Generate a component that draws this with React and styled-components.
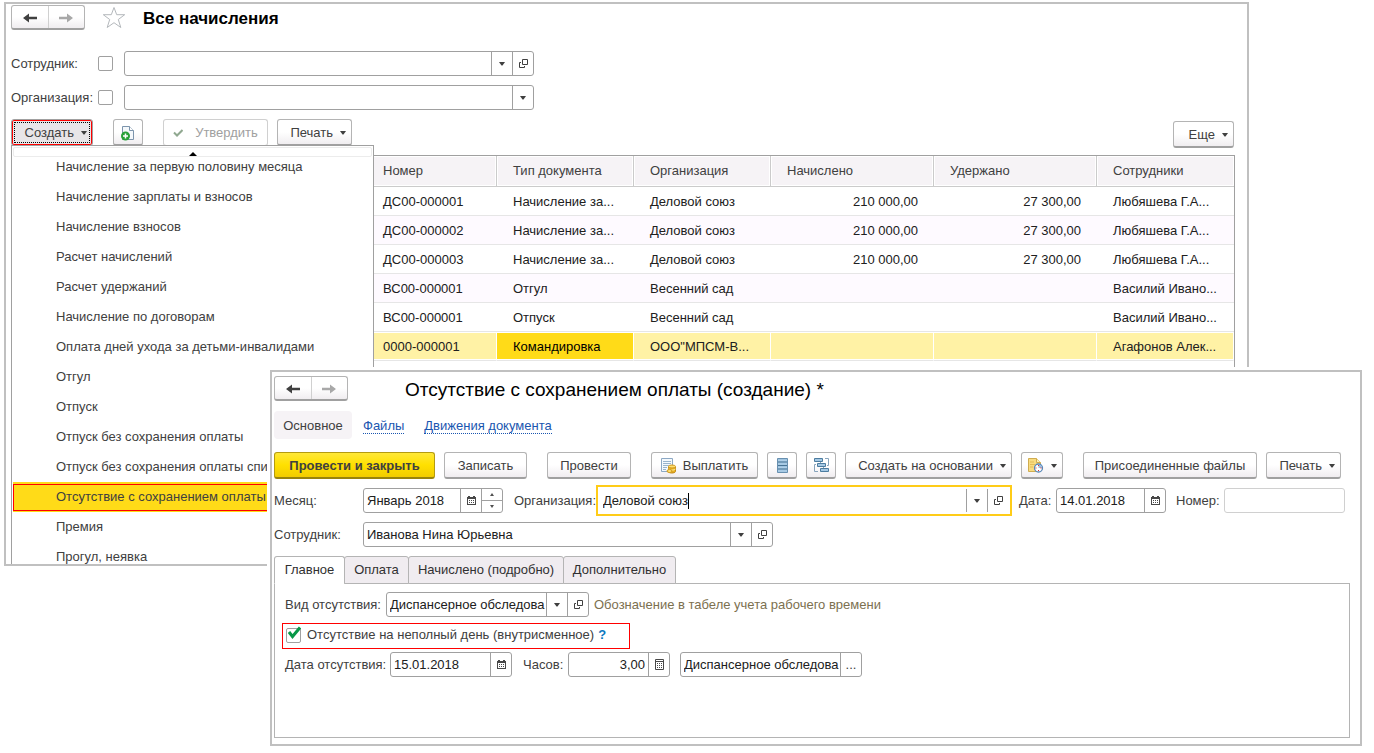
import React from "react";
import styled, { createGlobalStyle, css } from "styled-components";

const GlobalStyle = createGlobalStyle`
  *, *::before, *::after { box-sizing: border-box; }
  body {
    margin: 0;
    background: #fff;
    color: #404040;
    font: 13px/16px "Liberation Sans", Arial, sans-serif;
  }
  button, input { font: inherit; color: inherit; }
`;

/* ---------- windows ---------- */

const Desktop = styled.main`
  position: relative;
  min-height: 100vh;
  min-width: 1374px;
  overflow: hidden;
`;

const Window = styled.section`
  position: absolute;
  border: 2px solid #c0c0c0;
  background: #fff;
`;

const ListWindow = styled(Window)`
  z-index: 0;
  top: 2px;
  left: 4px;
  right: 125px;
  height: 564px;
  padding: 1px 13px 0 5px;
  overflow: hidden;
`;

const FormWindow = styled(Window)`
  z-index: 1;
  top: 370px;
  left: 270px;
  right: 12px;
  padding: 4px 10px 6px 2px;
  box-shadow: 0 0 0 3px #fff;
`;

const TitleBar = styled.header`
  display: flex;
  align-items: center;
  gap: ${(p) => p.$gap}px;
  height: 25px;
`;

const ListTitle = styled.h1`
  margin: 0;
  padding-top: 2px;
  font-size: 17px;
  line-height: 20px;
  font-weight: bold;
  color: #000;
`;

const FormTitle = styled(ListTitle).attrs({ as: "h2" })`
  font-size: 19px;
  font-weight: normal;
`;

/* ---------- buttons ---------- */

const raised = css`
  border: 1px solid #b4b4b4;
  border-bottom: 2px solid #a0a0a0;
  border-radius: 3px;
  background: linear-gradient(#fff 0%, #fff 50%, #f0edf0 100%);
`;

const NavGroup = styled.div`
  ${raised}
  display: flex;
  width: 74px;
  height: 25px;
`;

const NavButton = styled.button`
  flex: 1;
  display: flex;
  align-items: center;
  justify-content: center;
  padding: 1px 0 0;
  border: 0;
  background: none;
  color: #404040;
  & + & {
    border-left: 1px solid #d0d0d0;
    color: #a8a8a8;
  }
`;

const Button = styled.button`
  ${raised}
  display: flex;
  align-items: center;
  justify-content: ${(p) => (p.$menu ? "flex-end" : "center")};
  gap: ${(p) => p.$gap || 7}px;
  width: ${(p) => p.$width}px;
  height: 27px;
  padding: ${(p) => (p.$menu ? "1px 5px 0 0" : "1px 0 0")};
  white-space: nowrap;
  ${(p) =>
    p.$primary &&
    css`
      border-color: #b49b10;
      border-bottom-color: #98830c;
      background: linear-gradient(#ffe838 0%, #ffe000 50%, #f2cc00 100%);
      font-weight: bold;
    `}
  ${(p) =>
    p.$pressed &&
    css`
      background: #e8e5e8;
      border: 1px solid #a0a0a0;
      outline: 1px dotted #000;
      outline-offset: -4px;
      box-shadow: inset 0 0 0 1px #f00;
    `}
  &:disabled {
    color: #a0a0a0;
    border-color: #d0d0d0;
    border-bottom: 1px solid #c8c8c8;
    background: #fff;
  }
`;

const Toolbar = styled.div`
  display: flex;
  align-items: flex-start;
  gap: 9px;
`;

const ListToolbar = styled(Toolbar)`
  margin-top: 9px;
  height: 36px;
`;

const Spacer = styled.span`
  flex: ${(p) => (p.$width ? "none" : 1)};
  width: ${(p) => p.$width || 0}px;
`;

const MoreSlot = styled.div`
  padding-top: 2px;
`;

/* ---------- fields ---------- */

const Row = styled.div`
  display: flex;
  align-items: center;
  margin-top: ${(p) => p.$top || 0}px;
  height: 25px;
`;

const Label = styled.label`
  flex: none;
  width: ${(p) => p.$width}px;
  white-space: nowrap;
`;

const Field = styled.div`
  display: flex;
  flex: ${(p) => (p.$grow ? 1 : "none")};
  width: ${(p) => (p.$grow ? "auto" : `${p.$width}px`)};
  height: 25px;
  margin-right: ${(p) => p.$after || 0}px;
  border: 1px solid ${(p) => (p.$muted ? "#d0d0d0" : "#a0a0a0")};
  border-radius: 3px;
  background: #fff;
  ${(p) =>
    p.$focused &&
    css`
      height: 31px;
      padding: 2px;
      border: 2px solid #ffcc18;
      border-radius: 0;
    `}
`;

const Input = styled.input`
  flex: 1;
  min-width: 0;
  width: 0;
  padding: 0 ${(p) => (p.$right ? 3 : 0)}px 0 3px;
  border: 0;
  outline: 0;
  background: none;
  color: #202020;
  text-align: ${(p) => (p.$right ? "right" : "left")};
  ${(p) =>
    p.$content &&
    css`
      flex: none;
      width: auto;
      field-sizing: content;
    `}
`;

const Caret = styled.span`
  flex: none;
  align-self: center;
  width: 1px;
  height: 16px;
  margin-right: auto;
  background: #000;
`;

const FieldButton = styled.button`
  flex: none;
  display: flex;
  align-items: center;
  justify-content: center;
  width: 21px;
  padding: 0;
  border: 0;
  border-left: 1px solid #a0a0a0;
  background: none;
`;

const Spinner = styled.div`
  display: flex;
  flex-direction: column;
  width: 21px;
  border-left: 1px solid #a0a0a0;
`;

const SpinButton = styled.button`
  flex: 1;
  display: flex;
  align-items: center;
  justify-content: center;
  padding: 0;
  border: 0;
  background: none;
  & + & {
    border-top: 1px solid #a0a0a0;
  }
`;

const Check = styled.input.attrs({ type: "checkbox" })`
  appearance: none;
  flex: none;
  width: 15px;
  height: 15px;
  margin: 0 ${(p) => p.$after || 0}px 0 0;
  border: 1px solid #a0a0a0;
  border-radius: 2px;
  background: #fff;
`;

/* ---------- drop-down menu ---------- */

const MenuAnchor = styled.div`
  position: relative;
  margin-right: 11px;
`;

const Menu = styled.ul`
  position: absolute;
  z-index: 1;
  top: 26px;
  left: 0;
  width: 363px;
  height: 430px;
  margin: 0;
  padding: 1px;
  border: 1px solid #a0a0a0;
  background: #fff;
  list-style: none;
  overflow: hidden;
`;

const ScrollUp = styled.li`
  display: flex;
  align-items: flex-end;
  justify-content: center;
  height: 10px;
  margin-bottom: -5px;
  border: 1px solid #ececec;
  border-radius: 2px;
`;

const MenuItem = styled.li`
  height: 30px;
  padding-top: ${(p) => (p.$active ? 2 : 0)}px;
  background: ${(p) => (p.$active ? "#ffdb18" : "none")};
`;

const MenuButton = styled.button`
  display: block;
  width: 100%;
  height: ${(p) => (p.$active ? 27 : 30)}px;
  padding: ${(p) => (p.$active ? "0 0 2px 42px" : "0 0 0 43px")};
  border: ${(p) => (p.$active ? "1px solid #f00" : "0")};
  background: none;
  text-align: left;
  white-space: nowrap;
`;

/* ---------- table ---------- */

const Table = styled.table`
  width: 100%;
  table-layout: fixed;
  border: 1px solid #a0a0a0;
  border-spacing: 0;
  color: #202020;
`;

const Th = styled.th`
  height: 31px;
  padding: 0 0 0 16px;
  border-right: 1px solid #cbcbcb;
  border-bottom: 1px solid #cbcbcb;
  background: #f6f3f6;
  box-shadow: inset 0 0 0 1px #fff;
  color: #404040;
  font-weight: normal;
  text-align: left;
  &:last-child {
    border-right: 0;
  }
`;

const Td = styled.td`
  height: 29px;
  padding: 1px 16px 0;
  border-bottom: 1px solid #e6e6e6;
  text-align: ${(p) => (p.$right ? "right" : "left")};
  white-space: nowrap;
  overflow: hidden;
`;

const Tr = styled.tr`
  &:nth-child(even) {
    background: #fefaff;
  }
  ${(p) =>
    p.$selected &&
    css`
      && {
        background: #fff2a5;
      }
      td {
        border-right: 1px solid #fff;
        box-shadow: inset 0 1px #fff, inset 0 -1px #fff;
      }
      td:nth-child(3) {
        background: #ffdb18;
        color: #000;
      }
    `}
`;

/* ---------- form navigation and tabs ---------- */

const FormNav = styled.nav`
  display: flex;
  align-items: center;
  gap: 20px;
  height: 28px;
  margin: 10px 0 13px;
`;

const CurrentSection = styled.span`
  width: 78px;
  margin-right: -9px;
  padding: 7px 0 5px;
  border-radius: 4px;
  background: #f6f3f6;
  text-align: center;
`;

const SectionLink = styled.a`
  margin-top: 2px;
  border-bottom: 1px dotted #1a56b0;
  color: #1a56b0;
  line-height: 15px;
  text-decoration: none;
`;

const Tabs = styled.div`
  display: flex;
  position: relative;
  margin: 9px 0 -1px;
`;

const Tab = styled.button`
  width: ${(p) => p.$width}px;
  height: 28px;
  margin-right: -1px;
  padding: 0;
  border: 1px solid #b4b4b4;
  border-radius: 3px 3px 0 0;
  border-bottom-color: ${(p) => (p.$active ? "#fff" : "#b4b4b4")};
  background: ${(p) => (p.$active ? "#fff" : "#f0ecf0")};
  color: #303030;
`;

const Panel = styled.div`
  min-height: 155px;
  padding: 8px 10px;
  border: 1px solid #b4b4b4;
`;

const Highlight = styled.div`
  display: flex;
  align-items: center;
  width: 348px;
  height: 26px;
  margin: 6px 0 3px -3px;
  padding: 0 0 2px 3px;
  border: 1px solid #f00;
`;

const CheckWrap = styled.span`
  position: relative;
  display: flex;
  margin-right: 6px;
  svg {
    position: absolute;
    left: 2px;
    top: -2px;
    pointer-events: none;
  }
`;

const Hint = styled.span`
  color: #7c7050;
`;

const HelpLink = styled.a`
  margin-left: 4px;
  color: #0a78c0;
  font-weight: bold;
  text-decoration: none;
`;

/* ---------- icons ---------- */

const ArrowIcon = ({ right }) => (
  <svg width="14" height="10" viewBox="0 0 14 10" aria-hidden="true">
    <path
      d={right ? "M0 3.700h8V0.500L14 5 8 9.500V6.300H0z" : "M14 3.700H6V0.500L0 5l6 4.500V6.300h8z"}
      fill="currentColor"
    />
  </svg>
);

const StarIcon = () => (
  <svg width="24" height="23" viewBox="0 0 24 23" aria-hidden="true">
    <path
      d="M12 1.500l2.700 7.200h8l-6.400 4.800 2.500 8-6.800-4.800-6.800 4.800 2.500-8L1.300 8.700h8z"
      fill="#fff"
      stroke="#b4b8bc"
    />
  </svg>
);

const DownIcon = () => (
  <svg width="6" height="4" viewBox="0 0 6 4" aria-hidden="true">
    <path d="M0 0h6L3.500 3.500h-1z" fill="#404040" />
  </svg>
);

const TinyIcon = ({ down }) => (
  <svg width="4" height="3" viewBox="0 0 4 3" aria-hidden="true">
    <path d={down ? "M0 0h4L2 3z" : "M0 3h4L2 0z"} fill="#505050" />
  </svg>
);

const ScrollUpIcon = () => (
  <svg width="8" height="4" viewBox="0 0 8 4" aria-hidden="true">
    <path d="M4 0l4 4H0z" fill="#000" />
  </svg>
);

const OpenIcon = () => (
  <svg width="9" height="9" viewBox="0 0 9 9" fill="none" stroke="#404040" aria-hidden="true">
    <path d="M3.500 0.500h5v5h-5zM2 3.500H0.500v5h5V7" />
  </svg>
);

const CalendarIcon = () => (
  <svg width="9" height="9" viewBox="0 0 9 9" aria-hidden="true">
    <path d="M0 1h1V0h2v1h3V0h2v1h1v8H0z" fill="#484848" />
    <path d="M1 3h7v5H1z" fill="#fff" />
    <path d="M2 4h1v1H2zM4 4h1v1H4zM6 4h1v1H6zM2 6h1v1H2zM4 6h1v1H4zM6 6h1v1H6z" fill="#484848" />
  </svg>
);

const CalculatorIcon = () => (
  <svg width="9" height="11" viewBox="0 0 9 11" aria-hidden="true">
    <path d="M.5.5h8v10h-8zM0 2.500h9" fill="#fff" stroke="#484848" />
    <path
      d="M2 4h1v1H2zM4 4h1v1H4zM6 4h1v1H6zM2 6h1v1H2zM4 6h1v1H4zM6 6h1v1H6zM2 8h1v1H2zM4 8h1v1H4zM6 8h1v1H6z"
      fill="#484848"
    />
  </svg>
);

const NewDocIcon = () => (
  <svg width="14" height="16" viewBox="0 0 14 16" aria-hidden="true">
    <path d="M1.500 1.500h7l4 4v9h-11z" fill="#f4f8fb" stroke="#7c94ac" />
    <path d="M8.500 1.500v4h4" fill="#fff" stroke="#7c94ac" />
    <circle cx="4.500" cy="11" r="4.500" fill="#28a038" />
    <path d="M4.500 8.500v5M2 11h5" stroke="#fff" strokeWidth="1.500" />
  </svg>
);

const ApproveIcon = () => (
  <svg width="10" height="8" viewBox="0 0 10 8" aria-hidden="true">
    <path d="M1 3.500L4 6.500 9.500 1" fill="none" stroke="#90a890" strokeWidth="2" />
  </svg>
);

const PayIcon = () => (
  <svg width="15" height="16" viewBox="0 0 15 16" aria-hidden="true">
    <path d="M.5.5h11v13H.5z" fill="#f4f9fd" stroke="#8ca8c4" />
    <path d="M2 3.500h8M2 5.500h8M2 7.500h6M2 9.500h4M2 11.500h3" stroke="#98b4cc" />
    <path d="M7.500 9v4.500c0 2 6.500 2 7 0V9z" fill="#e8b020" stroke="#c08818" />
    <path d="M7.500 11c1 1.500 6 1.500 7 0" fill="none" stroke="#fff0a0" />
    <ellipse cx="11" cy="8.500" rx="3.500" ry="1.500" fill="#ffe070" stroke="#d0981c" />
    <ellipse cx="8.500" cy="13" rx="2.500" ry="1.500" fill="#ffe070" stroke="#d0981c" />
  </svg>
);

const RegisterIcon = () => (
  <svg width="11" height="15" viewBox="0 0 11 15" aria-hidden="true">
    <path d="M.5.5h10v14H.5z" fill="#a0c4e0" stroke="#6890b0" />
    <path d="M1 4h9M1 7.500h9M1 11h9" stroke="#487494" />
    <path d="M1 2.500h9M1 6h9M1 9.500h9M1 13h9" stroke="#b0d0e8" />
  </svg>
);

const StructureIcon = () => (
  <svg width="15" height="15" viewBox="0 0 15 15" fill="none" aria-hidden="true">
    <path d="M2 6.500H.5v7H4M11 .5h3.500v7H13M6.500 4v1M9.500 9v1" stroke="#88a4bc" />
    <path d="M.5.5h8v3h-8zM3.500 5.500h8v3h-8zM6.500 10.500h8v3h-8z" fill="#a4c8e4" stroke="#4c7ca0" />
  </svg>
);

const ScheduleIcon = () => (
  <svg width="16" height="15" viewBox="0 0 16 15" aria-hidden="true">
    <path d="M.5.5h8l4 4v9h-12z" fill="#f8dc80" stroke="#d0ac50" />
    <path d="M8.500.5v4h4" fill="#fff0b0" stroke="#d0ac50" />
    <path d="M2 4h4M2 6.500h5M2 9h3" stroke="#e4bc58" />
    <circle cx="10.500" cy="10" r="4" fill="#fff" stroke="#5888b8" strokeWidth="1.300" />
    <path d="M10.500 10V6.500A3.500 3.500 0 0 1 14 10z" fill="#98bce0" />
    <path d="M10 7h1v1h-1zM10 12h1v1h-1zM7.500 9.500h1v1h-1zM12.500 9.500h1v1h-1z" fill="#e03030" />
  </svg>
);

const TickIcon = () => (
  <svg width="13" height="13" viewBox="0 0 13 13" aria-hidden="true">
    <path d="M1 6l3.500 4.500L12 1.500" fill="none" stroke="#089848" strokeWidth="3" />
  </svg>
);

/* ---------- composite parts ---------- */

const Navigation = () => (
  <NavGroup>
    <NavButton aria-label="Назад"><ArrowIcon /></NavButton>
    <NavButton aria-label="Вперед"><ArrowIcon right /></NavButton>
  </NavGroup>
);

const Choose = () => <FieldButton aria-label="Выбрать"><DownIcon /></FieldButton>;
const Open = () => <FieldButton aria-label="Открыть"><OpenIcon /></FieldButton>;
const Calendar = () => <FieldButton aria-label="Календарь"><CalendarIcon /></FieldButton>;

const menuItems = [
  "Начисление за первую половину месяца",
  "Начисление зарплаты и взносов",
  "Начисление взносов",
  "Расчет начислений",
  "Расчет удержаний",
  "Начисление по договорам",
  "Оплата дней ухода за детьми-инвалидами",
  "Отгул",
  "Отпуск",
  "Отпуск без сохранения оплаты",
  "Отпуск без сохранения оплаты спи",
  "Отсутствие с сохранением оплаты",
  "Премия",
  "Прогул, неявка",
];
const activeItem = "Отсутствие с сохранением оплаты";

const columns = ["Номер", "Тип документа", "Организация", "Начислено", "Удержано", "Сотрудники"];
const columnWidths = [355, 130, 137, 137, 163, 163, 137];
const records = [
  ["ДС00-000001", "Начисление за...", "Деловой союз", "210 000,00", "27 300,00", "Любяшева Г.А..."],
  ["ДС00-000002", "Начисление за...", "Деловой союз", "210 000,00", "27 300,00", "Любяшева Г.А..."],
  ["ДС00-000003", "Начисление за...", "Деловой союз", "210 000,00", "27 300,00", "Любяшева Г.А..."],
  ["ВС00-000001", "Отгул", "Весенний сад", "", "", "Василий Ивано..."],
  ["ВС00-000001", "Отпуск", "Весенний сад", "", "", "Василий Ивано..."],
  ["0000-000001", "Командировка", "ООО\"МПСМ-В...", "", "", "Агафонов Алек..."],
];

const AccrualList = () => (
  <ListWindow>
    <TitleBar $gap={17}>
      <Navigation />
      <StarIcon />
      <ListTitle>Все начисления</ListTitle>
    </TitleBar>
    <Row $top={21}>
      <Label $width={87} htmlFor="filter-employee">Сотрудник:</Label>
      <Check $after={11} aria-label="Отбор по сотруднику" />
      <Field $width={410}>
        <Input id="filter-employee" />
        <Choose />
        <Open />
      </Field>
    </Row>
    <Row $top={9}>
      <Label $width={87} htmlFor="filter-company">Организация:</Label>
      <Check $after={11} aria-label="Отбор по организации" />
      <Field $width={410}>
        <Input id="filter-company" />
        <Choose />
      </Field>
    </Row>
    <ListToolbar>
      <MenuAnchor>
        <Button $width={82} $menu $pressed>Создать <DownIcon /></Button>
        <Menu>
          <ScrollUp><ScrollUpIcon /></ScrollUp>
          {menuItems.map((item) => (
            <MenuItem key={item} $active={item === activeItem}>
              <MenuButton $active={item === activeItem}>{item}</MenuButton>
            </MenuItem>
          ))}
        </Menu>
      </MenuAnchor>
      <Button $width={30} aria-label="Создать копированием"><NewDocIcon /></Button>
      <Spacer $width={2} />
      <Button $width={105} $gap={12} disabled><ApproveIcon /> Утвердить</Button>
      <Button $width={75} $menu>Печать <DownIcon /></Button>
      <Spacer />
      <MoreSlot>
        <Button $width={61} $menu>Еще <DownIcon /></Button>
      </MoreSlot>
    </ListToolbar>
    <Table>
      <colgroup>
        {columnWidths.map((width, i) => <col key={i} width={width} />)}
      </colgroup>
      <thead>
        <tr>
          <Th as="td" />
          {columns.map((name) => <Th key={name}>{name}</Th>)}
        </tr>
      </thead>
      <tbody>
        {records.map((record, i) => (
          <Tr key={i} $selected={i === 5}>
            <Td />
            {record.map((value, j) => (
              <Td key={j} $right={j === 3 || j === 4}>{value}</Td>
            ))}
          </Tr>
        ))}
        <tr><td colSpan={7} height="200" /></tr>
      </tbody>
    </Table>
  </ListWindow>
);

const AbsenceForm = () => (
  <FormWindow>
    <TitleBar $gap={57}>
      <Navigation />
      <FormTitle>Отсутствие с сохранением оплаты (создание) *</FormTitle>
    </TitleBar>
    <FormNav>
      <CurrentSection>Основное</CurrentSection>
      <SectionLink href="#files">Файлы</SectionLink>
      <SectionLink href="#movements">Движения документа</SectionLink>
    </FormNav>
    <Toolbar>
      <Button $width={161} $primary>Провести и закрыть</Button>
      <Button $width={83}>Записать</Button>
      <Spacer $width={2} />
      <Button $width={84}>Провести</Button>
      <Spacer $width={2} />
      <Button $width={107}><PayIcon /> Выплатить</Button>
      <Button $width={30} aria-label="Движения"><RegisterIcon /></Button>
      <Button $width={30} aria-label="Структура"><StructureIcon /></Button>
      <Button $width={167} $menu>Создать на основании <DownIcon /></Button>
      <Button $width={42} $menu aria-label="Задачи"><ScheduleIcon /><DownIcon /></Button>
      <Spacer $width={2} />
      <Button $width={174}>Присоединенные файлы</Button>
      <Button $width={75} $menu>Печать <DownIcon /></Button>
    </Toolbar>
    <Row $top={9}>
      <Label $width={89} htmlFor="month">Месяц:</Label>
      <Field $width={140} $after={11}>
        <Input id="month" defaultValue="Январь 2018" />
        <Calendar />
        <Spinner>
          <SpinButton aria-label="Следующий месяц"><TinyIcon /></SpinButton>
          <SpinButton aria-label="Предыдущий месяц"><TinyIcon down /></SpinButton>
        </Spinner>
      </Field>
      <Label $width={82} htmlFor="company">Организация:</Label>
      <Field $grow $focused $after={7}>
        <Input id="company" $content defaultValue="Деловой союз" />
        <Caret />
        <Choose />
        <Open />
      </Field>
      <Label $width={37} htmlFor="date">Дата:</Label>
      <Field $width={110} $after={10}>
        <Input id="date" defaultValue="14.01.2018" />
        <Calendar />
      </Field>
      <Label $width={48} htmlFor="number">Номер:</Label>
      <Field $width={121} $after={5} $muted>
        <Input id="number" />
      </Field>
    </Row>
    <Row $top={9}>
      <Label $width={89} htmlFor="employee">Сотрудник:</Label>
      <Field $width={410}>
        <Input id="employee" defaultValue="Иванова Нина Юрьевна" />
        <Choose />
        <Open />
      </Field>
    </Row>
    <Tabs>
      <Tab $width={71} $active>Главное</Tab>
      <Tab $width={65}>Оплата</Tab>
      <Tab $width={156}>Начислено (подробно)</Tab>
      <Tab $width={113}>Дополнительно</Tab>
    </Tabs>
    <Panel>
      <Row>
        <Label $width={101} htmlFor="kind">Вид отсутствия:</Label>
        <Field $width={203} $after={5}>
          <Input id="kind" defaultValue="Диспансерное обследова" />
          <Choose />
          <Open />
        </Field>
        <Hint>Обозначение в табеле учета рабочего времени</Hint>
      </Row>
      <Highlight>
        <CheckWrap>
          <Check id="partial-day" defaultChecked />
          <TickIcon />
        </CheckWrap>
        <label htmlFor="partial-day">Отсутствие на неполный день (внутрисменное)</label>
        <HelpLink href="#help">?</HelpLink>
      </Highlight>
      <Row>
        <Label $width={105} htmlFor="absence-date">Дата отсутствия:</Label>
        <Field $width={122} $after={11}>
          <Input id="absence-date" defaultValue="15.01.2018" />
          <Calendar />
        </Field>
        <Label $width={45} htmlFor="hours">Часов:</Label>
        <Field $width={102} $after={10}>
          <Input id="hours" $right defaultValue="3,00" />
          <FieldButton aria-label="Калькулятор"><CalculatorIcon /></FieldButton>
        </Field>
        <Field $width={182}>
          <Input aria-label="Вид времени" defaultValue="Диспансерное обследова" />
          <FieldButton aria-label="Выбрать вид времени">...</FieldButton>
        </Field>
      </Row>
    </Panel>
  </FormWindow>
);

export default function App() {
  return (
    <>
      <GlobalStyle />
      <Desktop>
        <AccrualList />
        <AbsenceForm />
      </Desktop>
    </>
  );
}
